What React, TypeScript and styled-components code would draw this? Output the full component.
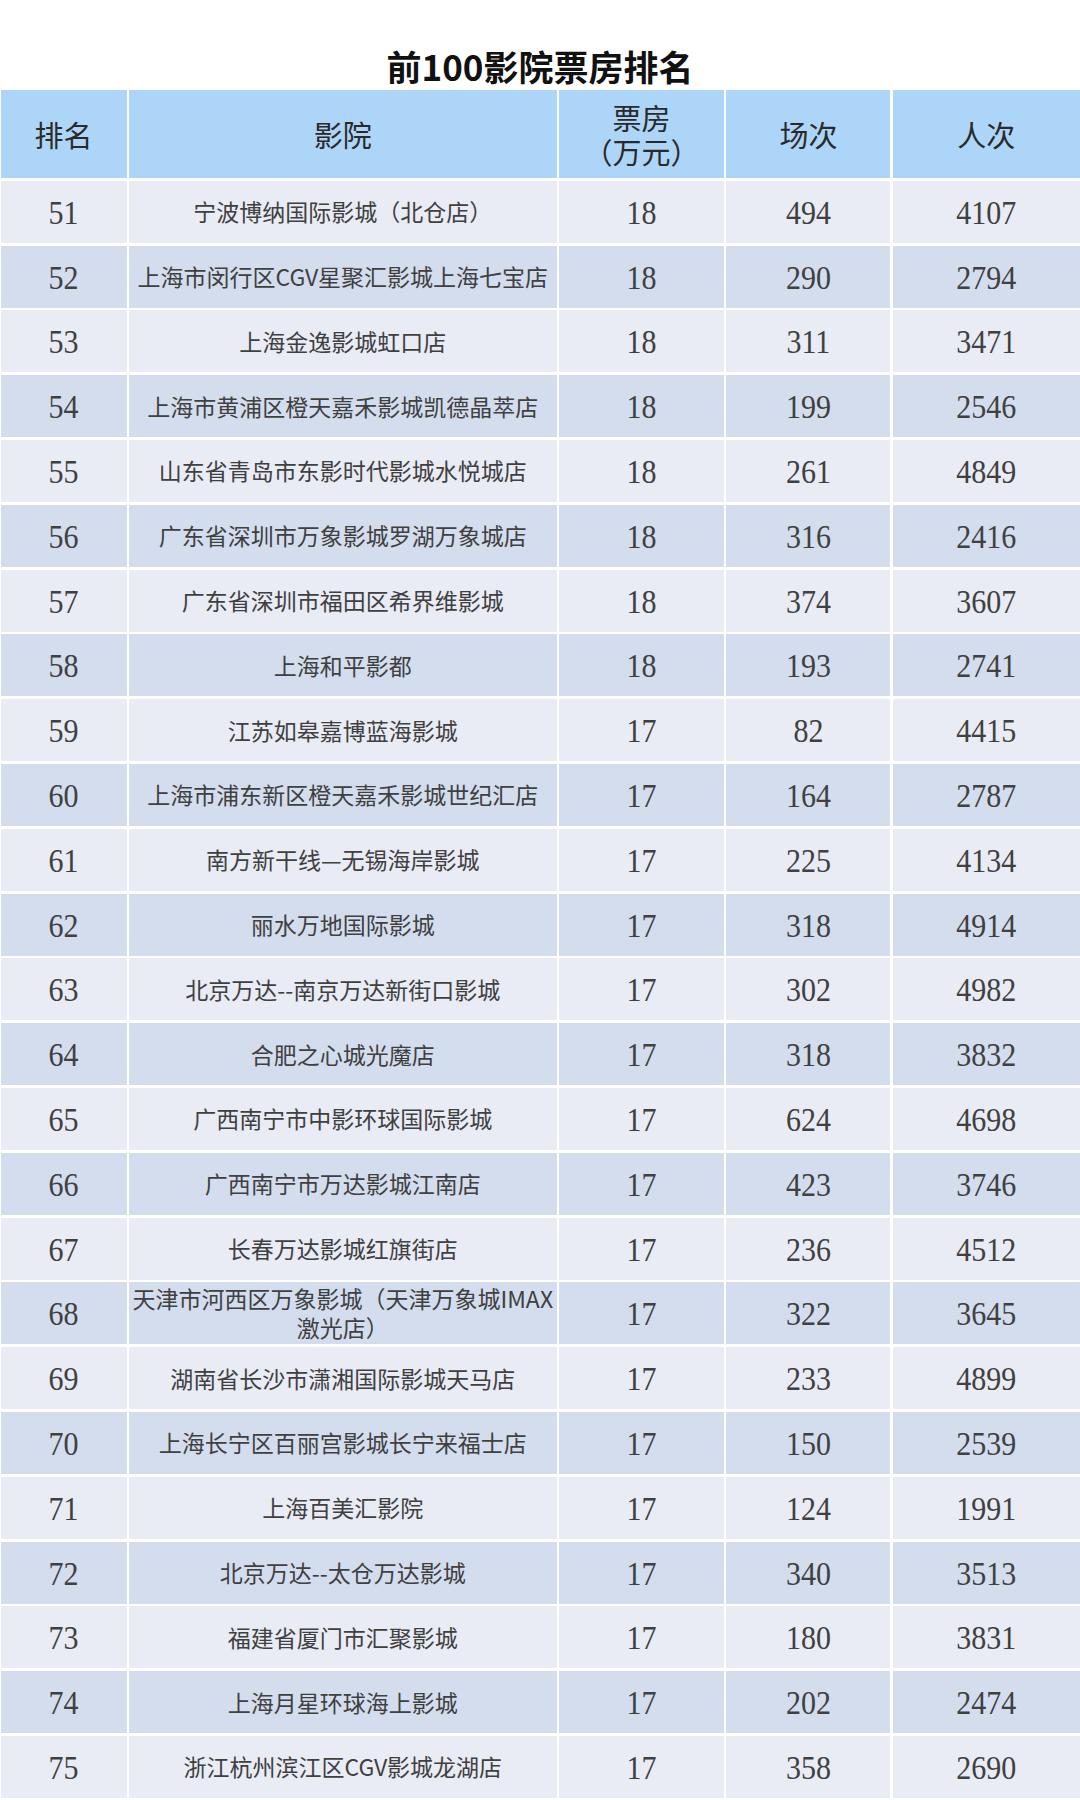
import React from 'react';
import styled, { createGlobalStyle } from 'styled-components';

const GlobalStyle = createGlobalStyle`
  html, body {
    margin: 0;
    padding: 0;
    background: #ffffff;
  }
  body {
    font-family: 'Noto Sans CJK SC', 'Noto Sans', sans-serif;
  }
`;

const colors = {
  header: '#add5f7',
  light: '#e9ebf5',
  dark: '#d3ddee',
  text: '#404040',
  headText: '#2a2a2a',
};

type Row = [number, React.ReactNode, number, number, number];

const rows: Row[] = [
  [51, '宁波博纳国际影城（北仓店）', 18, 494, 4107],
  [52, '上海市闵行区CGV星聚汇影城上海七宝店', 18, 290, 2794],
  [53, '上海金逸影城虹口店', 18, 311, 3471],
  [54, '上海市黄浦区橙天嘉禾影城凯德晶萃店', 18, 199, 2546],
  [55, '山东省青岛市东影时代影城水悦城店', 18, 261, 4849],
  [56, '广东省深圳市万象影城罗湖万象城店', 18, 316, 2416],
  [57, '广东省深圳市福田区希界维影城', 18, 374, 3607],
  [58, '上海和平影都', 18, 193, 2741],
  [59, '江苏如皋嘉博蓝海影城', 17, 82, 4415],
  [60, '上海市浦东新区橙天嘉禾影城世纪汇店', 17, 164, 2787],
  [61, '南方新干线—无锡海岸影城', 17, 225, 4134],
  [62, '丽水万地国际影城', 17, 318, 4914],
  [63, '北京万达--南京万达新街口影城', 17, 302, 4982],
  [64, '合肥之心城光魔店', 17, 318, 3832],
  [65, '广西南宁市中影环球国际影城', 17, 624, 4698],
  [66, '广西南宁市万达影城江南店', 17, 423, 3746],
  [67, '长春万达影城红旗街店', 17, 236, 4512],
  [
    68,
    <>
      天津市河西区万象影城（天津万象城IMAX
      <br />
      激光店）
    </>,
    17,
    322,
    3645,
  ],
  [69, '湖南省长沙市潇湘国际影城天马店', 17, 233, 4899],
  [70, '上海长宁区百丽宫影城长宁来福士店', 17, 150, 2539],
  [71, '上海百美汇影院', 17, 124, 1991],
  [72, '北京万达--太仓万达影城', 17, 340, 3513],
  [73, '福建省厦门市汇聚影城', 17, 180, 3831],
  [74, '上海月星环球海上影城', 17, 202, 2474],
  [75, '浙江杭州滨江区CGV影城龙湖店', 17, 358, 2690],
];

const Page = styled.div`
  width: 1080px;
  background: #ffffff;
`;

const Title = styled.h1`
  margin: 0;
  height: 89.5px;
  box-sizing: border-box;
  padding-top: 46px;
  line-height: 40px;
  text-align: center;
  font-size: 35px;
  font-weight: 700;
  color: #111111;
  font-family: 'Noto Sans CJK SC', sans-serif;
`;

const Table = styled.div`
  display: grid;
  grid-template-columns: 126px 428px 165px 164px 187px;
  grid-template-rows: 88.5px;
  grid-auto-rows: 62px;
  column-gap: 2.3px;
  row-gap: 2.8px;
  margin-left: 0.5px;
  width: 1079px;
`;

const HeadCell = styled.div`
  display: flex;
  flex-direction: column;
  align-items: center;
  justify-content: center;
  text-align: center;
  background: ${colors.header};
  color: ${colors.headText};
  font-size: 29px;
  line-height: 34px;
  font-family: 'Noto Sans CJK SC', sans-serif;
`;

const HeadLine = styled.span`
  display: block;
  height: 34px;
`;

const Cell = styled.div<{ $alt: boolean }>`
  display: flex;
  align-items: center;
  justify-content: center;
  text-align: center;
  background: ${(p) => (p.$alt ? colors.dark : colors.light)};
  color: ${colors.text};
  font-size: 23px;
  line-height: 29px;
  font-family: 'Noto Sans CJK SC', sans-serif;
  overflow: hidden;
`;

const Name = styled.span`
  white-space: nowrap;
`;

const Num = styled.span`
  display: inline-block;
  font-family: 'Liberation Serif', 'DejaVu Serif', serif;
  font-size: 30px;
  line-height: 1;
  color: ${colors.text};
  transform: scaleY(1.15);
`;

export default function App() {
  return (
    <Page>
      <GlobalStyle />
      <Title>前100影院票房排名</Title>
      <Table>
        <HeadCell>排名</HeadCell>
        <HeadCell>影院</HeadCell>
        <HeadCell>
          <HeadLine>票房</HeadLine>
          <HeadLine>（万元）</HeadLine>
        </HeadCell>
        <HeadCell>场次</HeadCell>
        <HeadCell>人次</HeadCell>
        {rows.map(([rank, name, box, shows, people], i) => {
          const alt = i % 2 === 1;
          return (
            <React.Fragment key={rank}>
              <Cell $alt={alt}>
                <Num>{rank}</Num>
              </Cell>
              <Cell $alt={alt}>
                <Name>{name}</Name>
              </Cell>
              <Cell $alt={alt}>
                <Num>{box}</Num>
              </Cell>
              <Cell $alt={alt}>
                <Num>{shows}</Num>
              </Cell>
              <Cell $alt={alt}>
                <Num>{people}</Num>
              </Cell>
            </React.Fragment>
          );
        })}
      </Table>
    </Page>
  );
}
